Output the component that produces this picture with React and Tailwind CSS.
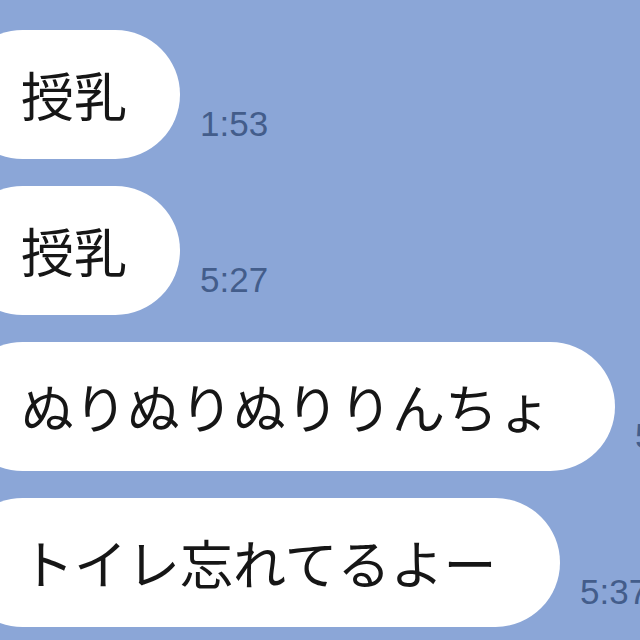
const messages = [
  { text: "授乳", time: "1:53", width: "w-[222px]" },
  { text: "授乳", time: "5:27", width: "w-[222px]" },
  { text: "ぬりぬりぬりりんちょ", time: "5:37", width: "w-[657px]" },
  { text: "トイレ忘れてるよー", time: "5:37", width: "w-[602px]" },
];

function Bubble({ text, time, width }) {
  return (
    <div className="flex items-end">
      <div
        className={`${width} h-[129px] shrink-0 ml-[-42px] pl-[63px] flex items-center rounded-full bg-white text-[53px] leading-none text-[#161616] whitespace-nowrap`}
        style={{ fontFamily: '"Noto Sans CJK JP", "Noto Sans", sans-serif' }}
      >
        {text}
      </div>
      <span className="ml-[20px] mb-[18px] shrink-0 text-[35px] leading-none text-[#435d8b] whitespace-nowrap font-['Liberation_Sans',sans-serif]">
        {time}
      </span>
    </div>
  );
}

export default function App() {
  return (
    <div className="w-[640px] h-[640px] overflow-hidden bg-[#8ba6d7] flex flex-col gap-[27px] pt-[30px]">
      {messages.map((m, i) => (
        <Bubble key={i} {...m} />
      ))}
    </div>
  );
}
